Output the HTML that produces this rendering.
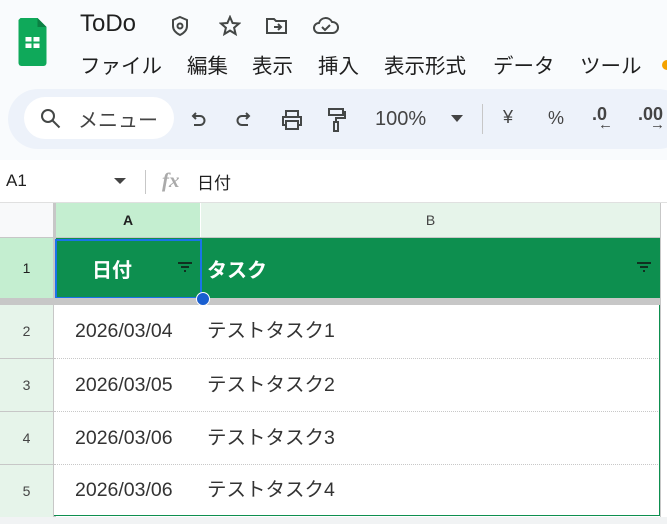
<html><head><style>
body{margin:0;width:667px;height:524px;overflow:hidden;background:#f9fbfd;font-family:"Liberation Sans","Noto Sans CJK JP",sans-serif;position:relative;color:#1f1f1f}
.a{position:absolute}
.ic{position:absolute;stroke:#444746;fill:none;stroke-width:2}
.m{position:absolute;top:49px;font-size:20.5px;white-space:nowrap}
.rn{position:absolute;left:0;width:53px;background:#e6f4ea;color:#444;font-size:14px;text-align:center;border-bottom:1px solid #c7c7c7}
.row{position:absolute;left:54px;width:606px;background:#fff;border-bottom:1px dotted #c8c8c8;font-size:19.5px;color:#333}
</style></head><body>
<svg class="a" style="left:18px;top:18px" width="29" height="48" viewBox="0 0 28 48"><path d="M2 0h17l9 9v36a3 3 0 0 1-3 3H3a3 3 0 0 1-3-3V2z" fill="#0fa95a"/><path d="M19 0v9h9z" fill="#0b8043"/><rect x="7" y="19" width="14" height="11" fill="#fff"/><path d="M7 24.5h14M14 19v11" stroke="#0fa95a" stroke-width="2"/></svg>
<div class="a" style="left:80px;top:10px;font-size:24px">ToDo</div>
<svg class="ic" style="left:170px;top:15px" width="20" height="22" viewBox="0 0 20 22"><path d="M10 2l7 3v6c0 4-3 7-7 9-4-2-7-5-7-9V5z"/><circle cx="10" cy="11" r="2.5"/></svg>
<svg class="ic" style="left:219px;top:15px" width="22" height="22" viewBox="0 0 22 22"><path d="M11 2l2.6 6 6.4.5-4.9 4.2 1.5 6.3L11 15.6 5.4 19l1.5-6.3L2 8.5l6.4-.5z"/></svg>
<svg class="ic" style="left:265px;top:16px" width="24" height="20" viewBox="0 0 24 20"><path d="M2 3h7l2 2h10v12H2z M9 11h7M13 8l3 3-3 3"/></svg>
<svg class="ic" style="left:312px;top:15px" width="28" height="20" viewBox="0 0 28 20"><path d="M7 18a5 5 0 0 1 0-10 7 7 0 0 1 13-1 5.5 5.5 0 0 1 1 11z M10 12l3 3 5-5"/></svg>
<div class="m" style="left:80px">ファイル</div>
<div class="m" style="left:187px">編集</div>
<div class="m" style="left:252px">表示</div>
<div class="m" style="left:318px">挿入</div>
<div class="m" style="left:384px">表示形式</div>
<div class="m" style="left:493px">データ</div>
<div class="m" style="left:580px">ツール</div>
<div class="a" style="left:662px;top:60px;width:10px;height:10px;border-radius:50%;background:#f4a200"></div>
<div class="a" style="left:8px;top:89px;width:680px;height:60px;border-radius:30px;background:#edf2fa"></div>
<div class="a" style="left:24px;top:97px;width:150px;height:42px;border-radius:21px;background:#fff"></div>
<svg class="ic" style="left:40px;top:108px" width="22" height="22" viewBox="0 0 22 22"><circle cx="8" cy="8" r="6"/><path d="M12.5 12.5l7 7"/></svg>
<div class="a" style="left:78px;top:104px;font-size:20px;color:#444">メニュー</div>
<svg class="ic" style="left:188px;top:110px" width="20" height="20" viewBox="0 0 20 20"><path d="M5 6h7a4 4 0 0 1 0 9H6M8 3L5 6l3 3"/></svg>
<svg class="ic" style="left:234px;top:110px" width="20" height="20" viewBox="0 0 20 20"><path d="M15 6H8a4 4 0 0 0 0 9h6M12 3l3 3-3 3"/></svg>
<svg class="ic" style="left:280px;top:108px" width="24" height="24" viewBox="0 0 24 24"><path d="M6 8V3h12v5M6 17H3V9h18v8h-3M6 13h12v8H6z"/></svg>
<svg class="ic" style="left:327px;top:107px" width="20" height="26" viewBox="0 0 20 26"><path d="M2 2h14v6H2z M16 5h2v6H9v4M7 15h4v9H7z"/></svg>
<div class="a" style="left:375px;top:108px;font-size:20px;color:#444">100%</div>
<div class="a" style="left:451px;top:115px;border:6px solid transparent;border-top:7px solid #444"></div>
<div class="a" style="left:482px;top:104px;width:1px;height:30px;background:#c7c7c7"></div>
<div class="a" style="left:503px;top:107px;font-size:18px;color:#444">¥</div>
<div class="a" style="left:548px;top:108px;font-size:18px;color:#444">%</div>
<div class="a" style="left:592px;top:104px;font-size:18px;font-weight:bold;color:#444">.0</div>
<div class="a" style="left:598px;top:116px;font-size:15px;color:#444">←</div>
<div class="a" style="left:638px;top:104px;font-size:18px;font-weight:bold;color:#444">.00</div>
<div class="a" style="left:650px;top:116px;font-size:15px;color:#444">→</div>
<div class="a" style="left:0;top:160px;width:667px;height:42px;background:#fff;border-bottom:1px solid #e0e0e0"></div>
<div class="a" style="left:6px;top:171px;font-size:17px">A1</div>
<div class="a" style="left:114px;top:178px;border:6px solid transparent;border-top:6px solid #444"></div>
<div class="a" style="left:145px;top:170px;width:1px;height:24px;background:#c7c7c7"></div>
<div class="a" style="left:162px;top:168px;font-size:21px;font-style:italic;font-weight:bold;color:#aaa;font-family:'Liberation Serif',serif">fx</div>
<div class="a" style="left:197px;top:169px;font-size:17px">日付</div>
<div class="a" style="left:0;top:203px;width:667px;height:321px;background:#fff"></div>
<div class="a" style="left:0;top:203px;width:53px;height:34px;background:#f8f9fa;border-right:3px solid #c7c7c7"></div>
<div class="a" style="left:56px;top:203px;width:144px;height:34px;background:#c4eed0;color:#1f1f1f;font-size:14px;font-weight:bold;text-align:center;line-height:34px">A</div>
<div class="a" style="left:201px;top:203px;width:459px;height:34px;background:#e6f4ea;font-size:14px;text-align:center;line-height:34px;color:#444">B</div>
<div class="a" style="left:660px;top:203px;width:7px;height:321px;background:#fff;border-left:1px solid #c7c7c7"></div>
<div class="a" style="left:0;top:237px;width:660px;height:1px;background:#c7c7c7"></div>
<div class="rn" style="top:238px;height:60px;line-height:60px;background:#c4eed0;border-right:3px solid #c7c7c7;width:53px;color:#1f1f1f">1</div>
<div class="a" style="left:56px;top:238px;width:604px;height:60px;background:#0d8f4f"></div>
<div class="a" style="left:55px;top:239px;width:143px;height:56px;border:2px solid #1a73e8"></div>
<div class="a" style="left:92px;top:254px;font-size:20px;font-weight:bold;color:#fff">日付</div>
<div class="a" style="left:207px;top:254px;font-size:20px;font-weight:bold;color:#fff">タスク</div>
<svg class="a" style="left:177px;top:262px" width="16" height="12"><path d="M1 1h14M4 5h8M7 9h2" stroke="#111" stroke-width="1.6"/></svg>
<svg class="a" style="left:636px;top:262px" width="16" height="12"><path d="M1 1h14M4 5h8M7 9h2" stroke="#111" stroke-width="1.6"/></svg>
<div class="a" style="left:0;top:298px;width:660px;height:7px;background:#c7c7c7"></div>
<div class="a" style="left:53px;top:298px;width:3px;height:226px;background:#c7c7c7"></div>
<div class="a" style="left:196px;top:292px;width:12px;height:12px;border-radius:50%;background:#1a5fd0;border:1px solid #fff"></div>
<div class="rn" style="top:305px;height:53px;line-height:53px">2</div>
<div class="rn" style="top:359px;height:52px;line-height:52px">3</div>
<div class="rn" style="top:412px;height:52px;line-height:52px">4</div>
<div class="rn" style="top:465px;height:52px;line-height:52px">5</div>
<div class="row" style="top:305px;height:53px;line-height:53px"><span style="margin-left:21px">2026/03/04</span><span class="a" style="left:153px">テストタスク1</span></div>
<div class="row" style="top:359px;height:52px;line-height:52px"><span style="margin-left:21px">2026/03/05</span><span class="a" style="left:153px">テストタスク2</span></div>
<div class="row" style="top:412px;height:52px;line-height:52px"><span style="margin-left:21px">2026/03/06</span><span class="a" style="left:153px">テストタスク3</span></div>
<div class="row" style="top:465px;height:50px;line-height:50px;border-bottom:1px solid #0d8f4f"><span style="margin-left:21px">2026/03/06</span><span class="a" style="left:153px">テストタスク4</span></div>
<div class="a" style="left:659px;top:305px;width:1px;height:211px;background:#0d8f4f"></div>
<div class="a" style="left:0;top:517px;width:667px;height:7px;background:#f1f3f4"></div>
</body></html>
